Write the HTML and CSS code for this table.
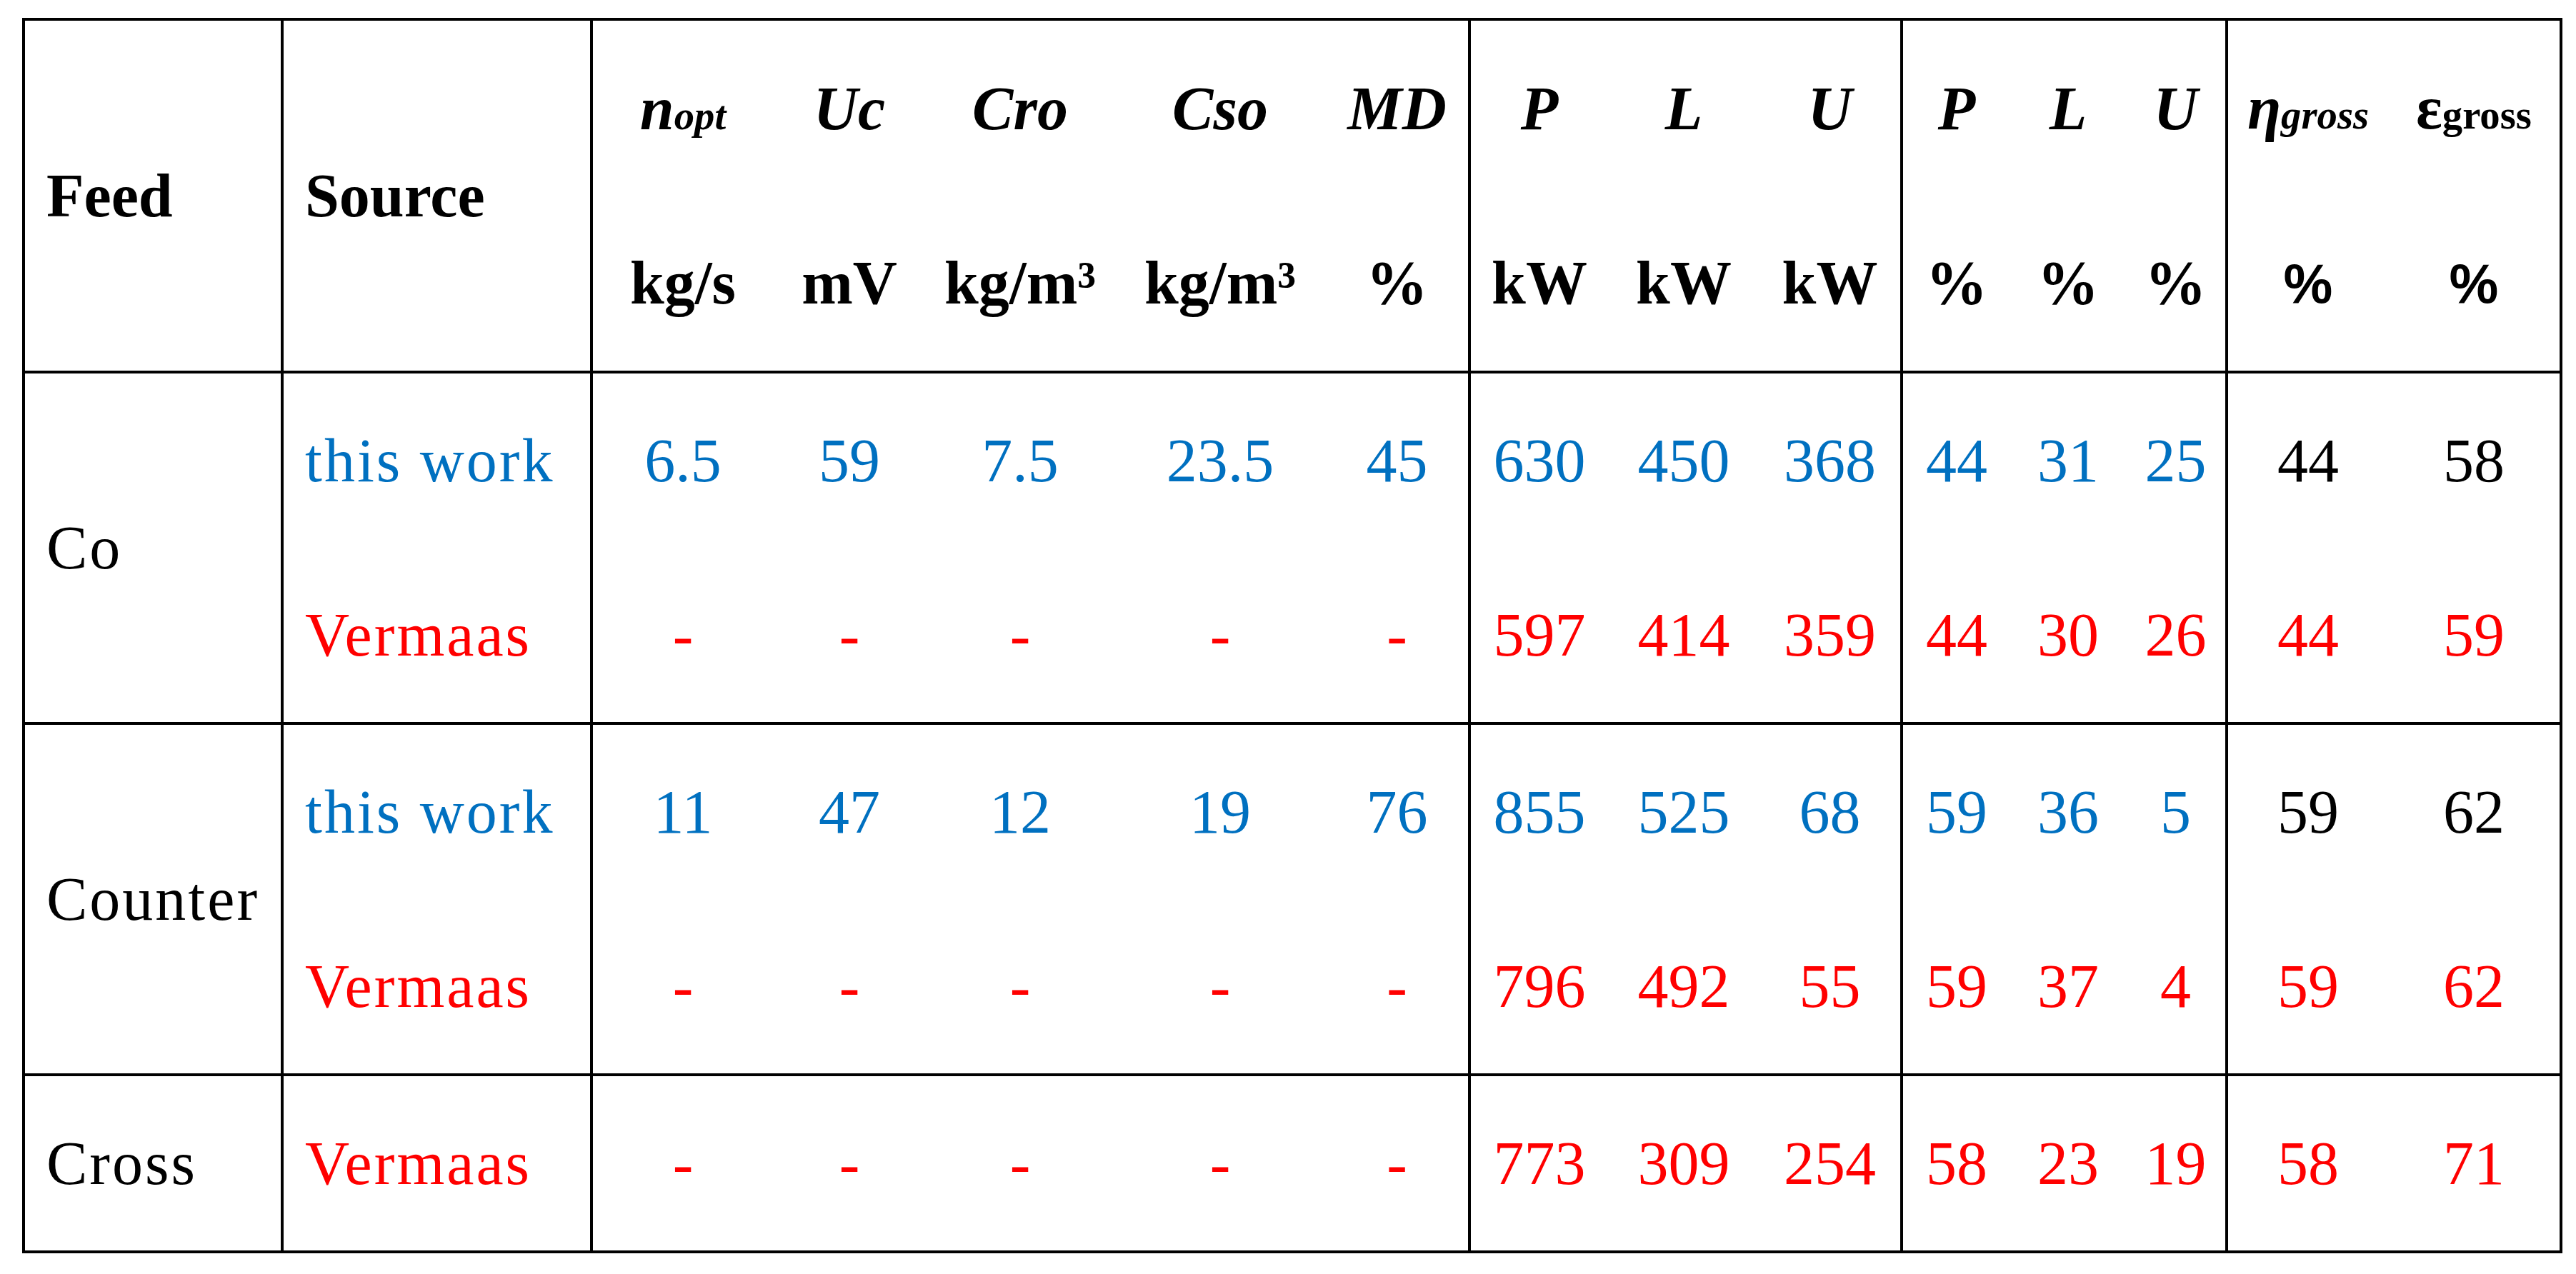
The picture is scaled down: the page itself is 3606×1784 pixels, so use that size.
FILE: index.html
```html
<!DOCTYPE html>
<html lang="en">
<head>
    <meta charset="UTF-8">
    <meta name="viewport" content="width=device-width, initial-scale=1.0">
    <title>Feed configuration comparison</title>
    <link rel="stylesheet" href="styles.css">
</head>
<body>
    <div class="page">
        <table class="results">
            <colgroup>
                <col class="w-feed"><col class="w-source">
                <col class="w-nopt"><col class="w-uc"><col class="w-cro"><col class="w-cso"><col class="w-md">
                <col class="w-pkw"><col class="w-lkw"><col class="w-ukw">
                <col class="w-ppc"><col class="w-lpc"><col class="w-upc">
                <col class="w-eta"><col class="w-eps">
            </colgroup>
            <thead>
                <tr>
                    <th class="label end">Feed</th>
                    <th class="label end">Source</th>
                    <th><i>n<span class="sub">opt</span></i><br>kg/s</th>
                    <th><i>Uc</i><br>mV</th>
                    <th><i>Cro</i><br>kg/m³</th>
                    <th><i>Cso</i><br>kg/m³</th>
                    <th class="end"><i>MD</i><br>%</th>
                    <th><i>P</i><br>kW</th>
                    <th><i>L</i><br>kW</th>
                    <th class="end"><i>U</i><br>kW</th>
                    <th><i>P</i><br>%</th>
                    <th><i>L</i><br>%</th>
                    <th class="end"><i>U</i><br>%</th>
                    <th><i>η<span class="sub">gross</span></i><br><span class="pct">%</span></th>
                    <th>ε<span class="sub">gross</span><br><span class="pct">%</span></th>
                </tr>
            </thead>
            <tbody>
                <!-- Co -->
                <tr class="ours">
                    <td class="label word end feed rule" rowspan="2">Co</td>
                    <td class="label word end">this work</td>
                    <td>6.5</td><td>59</td><td>7.5</td><td>23.5</td><td class="end">45</td>
                    <td>630</td><td>450</td><td class="end">368</td>
                    <td>44</td><td>31</td><td class="end">25</td>
                    <td class="plain">44</td><td class="plain">58</td>
                </tr>
                <tr class="ref rule">
                    <td class="label word end">Vermaas</td>
                    <td>-</td><td>-</td><td>-</td><td>-</td><td class="end">-</td>
                    <td>597</td><td>414</td><td class="end">359</td>
                    <td>44</td><td>30</td><td class="end">26</td>
                    <td>44</td><td>59</td>
                </tr>

                <!-- Counter -->
                <tr class="ours">
                    <td class="label word end feed rule" rowspan="2">Counter</td>
                    <td class="label word end">this work</td>
                    <td>11</td><td>47</td><td>12</td><td>19</td><td class="end">76</td>
                    <td>855</td><td>525</td><td class="end">68</td>
                    <td>59</td><td>36</td><td class="end">5</td>
                    <td class="plain">59</td><td class="plain">62</td>
                </tr>
                <tr class="ref rule">
                    <td class="label word end">Vermaas</td>
                    <td>-</td><td>-</td><td>-</td><td>-</td><td class="end">-</td>
                    <td>796</td><td>492</td><td class="end">55</td>
                    <td>59</td><td>37</td><td class="end">4</td>
                    <td>59</td><td>62</td>
                </tr>

                <!-- Cross -->
                <tr class="ref">
                    <td class="label word end feed">Cross</td>
                    <td class="label word end">Vermaas</td>
                    <td>-</td><td>-</td><td>-</td><td>-</td><td class="end">-</td>
                    <td>773</td><td>309</td><td class="end">254</td>
                    <td>58</td><td>23</td><td class="end">19</td>
                    <td>58</td><td>71</td>
                </tr>
            </tbody>
        </table>
    </div>
</body>
</html>
```

FILE: styles.css
```css
body {
    margin: 0;
    background: #fff;
}

.page {
    padding: 25px 0 0 31px;
}

.results {
    width: 3556px;
    table-layout: fixed;
    border: 4px solid #000;
    border-spacing: 0;
    font-family: "Liberation Serif", "Times New Roman", serif;
    font-size: 86px;
    color: #000;
}

.results th,
.results td {
    padding: 0;
    line-height: 244px;
    text-align: center;
    vertical-align: middle;
    white-space: nowrap;
}

.results th {
    font-weight: 700;
    border-bottom: 4px solid #000;
}

.results .label {
    text-align: left;
    padding-left: 30px;
}

.results .word {
    letter-spacing: 3px;
}

.results .end { border-right: 4px solid #000; }
.results .rule,
.results tr.rule td { border-bottom: 4px solid #000; }

.sub {
    font-size: 0.66em;
    line-height: 0;
}

.pct {
    font-family: "Liberation Sans", Arial, sans-serif;
    font-size: 0.9em;
}

/* row colours: blue for this work, red for Vermaas */
.results tr.ours td { color: #0070c0; }
.results tr.ref td { color: #ff0000; }
.results tr td.plain,
.results tr td.feed { color: #000; }

/* column widths */
.w-feed { width: 362px; }
.w-source { width: 433px; }
.w-nopt { width: 252px; }
.w-uc { width: 214px; }
.w-cro { width: 264px; }
.w-cso { width: 296px; }
.w-md { width: 203px; }
.w-pkw { width: 192px; }
.w-lkw { width: 212px; }
.w-ukw { width: 201px; }
.w-ppc { width: 150px; }
.w-lpc { width: 162px; }
.w-upc { width: 143px; }
.w-eta { width: 224px; }
.w-eps { width: 240px; }
```
